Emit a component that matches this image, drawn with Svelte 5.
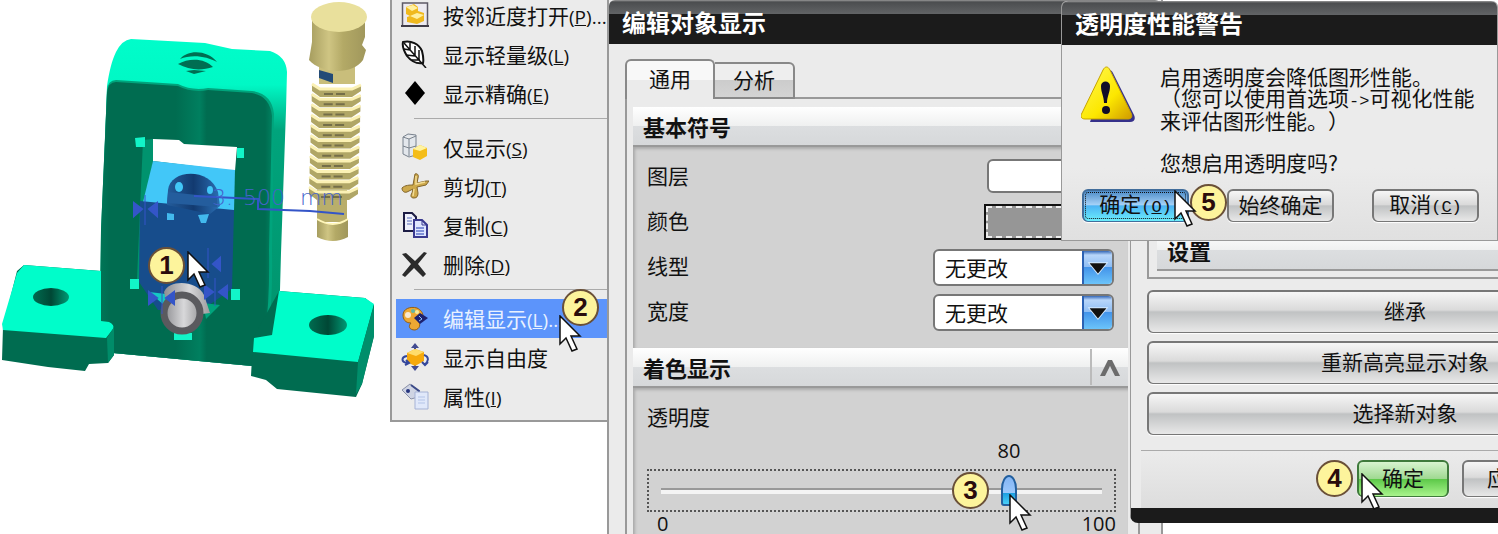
<script>
	let transparency = $state(80);
	let layer = $state("");
	let lineType = $state("none");
	let lineWidth = $state("none");
	let tab = $state("general");

	const menuGroups = [
		[
			{ icon: "open", label: "按邻近度打开", key: "P", more: true },
			{ icon: "feather", label: "显示轻量级", key: "L" },
			{ icon: "diamond", label: "显示精确", key: "E" }
		],
		[
			{ icon: "only", label: "仅显示", key: "S" },
			{ icon: "cut", label: "剪切", key: "T" },
			{ icon: "copy", label: "复制", key: "C" },
			{ icon: "delete", label: "删除", key: "D" }
		],
		[
			{ icon: "palette", label: "编辑显示", key: "L", more: true, active: true },
			{ icon: "freedom", label: "显示自由度" },
			{ icon: "props", label: "属性", key: "I" }
		]
	];

	const steps = [
		{ n: 1, x: 148, y: 247, cx: 187, cy: 251 },
		{ n: 2, x: 562, y: 289, cx: 559, cy: 315 },
		{ n: 3, x: 952, y: 472, cx: 1009, cy: 494 },
		{ n: 4, x: 1316, y: 460, cx: 1361, cy: 473 },
		{ n: 5, x: 1190, y: 184, cx: 1174, cy: 190 }
	];

	const threads = Array.from({ length: 11 }, (_, i) => ({ x: 312 - i * 0.3, y: 84 + i * 10.3 }));
</script>

{#snippet icon(name)}
	<svg class="icon" viewBox="0 0 28 28" aria-hidden="true">
		{#if name === "open"}
			<rect x="1.500" y="2" width="25" height="23" fill="#eceaf0" stroke="#5d5a66" stroke-width="1.500" />
			<path d="M5 6l8-3 4 3v4l6 2v8l-7 3-10-2v-5l3-1-4-2z" fill="#f0b91e" />
			<path d="M5 6l7-2 5 3-6 3zM9 15l7-3 7 2-7 4z" fill="#fff0a0" />
			<path d="M0 25h28" stroke="#3f3c48" stroke-width="2" />
		{:else if name === "feather"}
			<path d="M2 2c8-2 16 2 19 9 1 4 2 8 1 12-6 1-12-2-16-7C3 11 1 6 2 2z" fill="#fff" stroke="#111" stroke-width="2" />
			<path d="M3 3l22 25M9 3v7M14 6v9M18 10v10M3 9l6 1M5 15l9 1M11 20l8 0" fill="none" stroke="#111" stroke-width="1.500" />
		{:else if name === "diamond"}
			<path d="M14 2l10 12-10 12L4 14z" fill="#000" />
		{:else if name === "only"}
			<path d="M2 4l5-3 8 1v20l-7 2-6-3zM2 4l6 2 7-3M8 6v17M2 13l6 2 7-2" fill="#e3e7ec" stroke="#79828d" />
			<path d="M12 16l7-4 7 3v8l-7 4-7-3z" fill="#f4bd1a" />
			<path d="M12 16l7-4 7 3-7 3z" fill="#fff3a0" />
		{:else if name === "cut"}
			<path d="M14 2c3-1 4 2 3 4l-1 5 9-2 3 0-3 4-9 2 1 6c0 3-1 5-4 5s-4-2-2-5l1-4-6 3c-3 1-5-1-5-4 3-3 8-3 11-3z" fill="#cda94c" stroke="#82652b" />
			<path d="M15 4v8l9-2M13 17l-1 7" fill="none" stroke="#f2dc96" stroke-width="1.500" />
		{:else if name === "copy"}
			<path d="M3 2h8l4 4v14H3z" fill="#eef0fb" stroke="#1c1c44" stroke-width="2" />
			<path d="M6 7h5M6 10h5M6 13h5" stroke="#5568b8" />
			<path d="M13 9h8l5 5v12H13z" fill="#dfe6ff" stroke="#3a3a90" stroke-width="2" />
			<path d="M21 9v5h5" fill="none" stroke="#3a3a90" />
			<path d="M15 17h8M15 20h8M15 23h8" stroke="#6276cc" stroke-width="1.500" />
		{:else if name === "delete"}
			<path d="M1 4l4-1 9 8 9-9 3 1-9 11 8 10-3 3-9-9-9 9-3-2 9-11z" fill="#2b2b2b" />
		{:else if name === "palette"}
			<path d="M2 11C2 5 9 2 16 4c4 2 6 5 6 8l-5 5c3 3 2 8-3 9-6 0-7-4-4-7C4 19 2 15 2 11z" fill="#eda833" stroke="#945f12" />
			<circle cx="7" cy="11" r="3" fill="#f8e9cf" /><circle cx="12" cy="7" r="2" fill="#5fb7a8" /><circle cx="16" cy="8" r="2" fill="#f3eba0" />
			<path d="M13 14l6-5 8 5-8 6z" fill="#1c2170" /><path d="M18 12l3 3-3 2" fill="none" stroke="#8cc2ff" />
		{:else if name === "freedom"}
			<path d="M14 0l4 5h-8zM14 28l4-5h-8z" fill="#424b91" />
			<path d="M14 3v22" stroke="#424b91" stroke-width="2" />
			<path d="M6 10l8-4 9 3v9l-9 5-8-4z" fill="#f6a90c" /><path d="M6 10l8-4 9 3-8 4z" fill="#ffdc6b" />
			<path d="M6 13c-6 1-6 6 0 7M4 22l4-2-3-3M23 12c6 2 4 7 1 9M21 19l3 3 3-3" fill="none" stroke="#34479c" stroke-width="2" />
		{:else}
			<path d="M1 8l8-6 9 7-1 6-7 2z" fill="#cfd4e3" stroke="#8990a9" />
			<path d="M10 3l8 6-1 6" fill="none" stroke="#3c4b88" stroke-width="2" /><circle cx="7" cy="9" r="2" fill="#26357e" />
			<path d="M14 10h13v17H14z" fill="#e0e8fa" stroke="#a5b2d5" /><path d="M17 15h7M17 18h7M17 21h7" stroke="#b3c4e8" />
		{/if}
	</svg>
{/snippet}

<main class="desktop">
	<svg class="model" viewBox="0 0 390 420" role="img" aria-label="3D 模型">
		<defs>
			<linearGradient id="head" x1="0" x2="1">
				<stop offset="0" stop-color="#a69d5f" /><stop offset="0.35" stop-color="#cfc583" /><stop offset="0.6" stop-color="#b3a966" /><stop offset="1" stop-color="#a0975c" />
			</linearGradient>
			<linearGradient id="front" x1="0" x2="1">
				<stop offset="0" stop-color="#007657" /><stop offset="0.06" stop-color="#006c50" /><stop offset="0.44" stop-color="#006c50" />
				<stop offset="0.58" stop-color="#007f5f" /><stop offset="0.62" stop-color="#006c50" /><stop offset="0.96" stop-color="#006c50" /><stop offset="1" stop-color="#00805f" />
			</linearGradient>
			<linearGradient id="body" x1="0" y1="0" x2="0" y2="1">
				<stop offset="0" stop-color="#00fdca" /><stop offset="0.14" stop-color="#00f8c5" /><stop offset="0.28" stop-color="#00a47c" /><stop offset="0.8" stop-color="#00966f" /><stop offset="0.9" stop-color="#007a5a" />
			</linearGradient>
			<linearGradient id="cyl" x1="0" x2="1">
				<stop offset="0" stop-color="#245d9c" /><stop offset="0.5" stop-color="#123a70" /><stop offset="1" stop-color="#2b6fb4" />
			</linearGradient>
			<linearGradient id="bore" x1="0" x2="1">
				<stop offset="0" stop-color="#006c50" /><stop offset="0.5" stop-color="#004735" /><stop offset="1" stop-color="#009a75" />
			</linearGradient>
			<linearGradient id="pin" x1="0" x2="1">
				<stop offset="0" stop-color="#8e8e92" /><stop offset="0.55" stop-color="#d8d8da" /><stop offset="1" stop-color="#9c9c9e" />
			</linearGradient>
		</defs>

		<!-- upright -->
		<path d="M107 86C109 72 112 60 116 52Q122 40 131 39L205 43 232 49 270 51Q286 56 287 72L286 110 281 253 280 290 273 334 253 340 252 366 113 353 100 320 101 250z" fill="url(#body)" />
		<path d="M107 90Q108 80 116 80L178 84Q192 91 208 88L252 91Q272 94 274 114L272 250Q273 300 268 334L252 366 113 353 100 320 101 230z" fill="#00a47c" />
		<path d="M107 93Q108 82 116 82L178 86Q192 93 208 90L252 93Q270 96 272 116L269 250Q270 300 265 334L252 366 113 353 100 320 101 230z" fill="url(#front)" />
		<path d="M180 59c8-10 28-9 37 3-10-6-26-8-37-3zM178 64c12-7 28-5 35 3-12 4-24 3-35-3zM186 71l8-1 12 1-12 3z" fill="#006e52" />

		<!-- feet -->
		<path d="M24 265l77 6v50l8 2 5 6v26l-6 8-19 1-4 7-37-4-46-7 1-33 14-56z" fill="#006c50" />
		<path d="M24 265l77 6v50l8 1q6 3 4 7l-7 9-103-8-1-6 15-51z" fill="#00fdca" />
		<path d="M107 338l7-11v28l-6 8z" fill="#008c69" />
		<ellipse cx="51" cy="297" rx="18" ry="9" fill="url(#bore)" />
		<path d="M279 291l86 7 9 7v31l-12 48-6 13-79-8-11-9-15-4 2-38z" fill="#006c50" />
		<path d="M279 291l86 7 9 6-16 58-105-10 1-14 18-3z" fill="#00fdca" />
		<path d="M358 362l16-57v31l-12 48-6 10z" fill="#008e6b" />
		<ellipse cx="328" cy="325" rx="19" ry="10" fill="url(#bore)" />

		<!-- opening -->
		<path d="M143 140l10-1v22l-8 41-5 80-3-3z" fill="#00936e" />
		<path d="M153 139l26 1 5 4 53 3-2 24-82-10z" fill="#fff" />
		<path d="M153 161l82 9-1 41-91-9z" fill="#42c7f8" />
		<path d="M140 201l94 9-2 79-30 21h-44l-19-28z" fill="#174d8c" />
		<path d="M168 190c2-21 42-23 50 2l2 14-10 8-43-9z" fill="url(#cyl)" />
		<path d="M168 192l49 5v10l-50-4z" fill="#245d9d" />
		<ellipse cx="179" cy="187" rx="4" ry="5" fill="#42c7f8" /><ellipse cx="210" cy="190" rx="3" ry="4" fill="#42c7f8" />
		<path d="M198 215l11-1-3 9h-5zM167 213l7 1v6h-7z" fill="#42b9ed" />
		<path d="M135 138l10-1v10h-9zM237 148h7v10h-7zM130 279h9v10h-9zM231 289h9v11h-9zM174 333h18v7h-18z" fill="#12f5c8" />
		<path d="M149 292l17 2 6 18z" fill="#15c9c4" /><path d="M203 303l17 2-14 14z" fill="#00a47c" />
		<path d="M164 292c5-13 33-12 40 3l6 18-40 5z" fill="url(#pin)" />
		<circle cx="182" cy="313" r="18" fill="url(#pin)" stroke="#5a5a5e" stroke-width="7" />

		<!-- yellow screw -->
		<path d="M319 66l36-2v20h-36z" fill="#c9be7b" /><path d="M319 70l14 4v9l-14-5z" fill="#234b77" />
		<path d="M312 16v26l-3 18c12 14 44 15 54 0l3-10-4-5 3-8V16z" fill="url(#head)" />
		<ellipse cx="339" cy="17" rx="28" ry="15" fill="#e9e09c" />
		<path d="M317 190h30v32h-30z" fill="#b9ae6b" />
		{#each threads as t}
			<path d="M{t.x} {t.y}l8 5h32l9-4v6l-9 6h-32l-8-6z" fill="#b0a666" />
			<path d="M{t.x + 12} {t.y + 10}h22" stroke="#746e48" stroke-width="2" stroke-dasharray="9 3" />
			<path d="M{t.x} {t.y}l8 5h32l9-4" fill="none" stroke="#fbf1b4" stroke-width="3" />
		{/each}
		<path d="M317 219q16 10 31 0v18q-15 8-31 0z" fill="url(#head)" />
		<path d="M317 219q16 10 31 0" fill="none" stroke="#fff6b9" stroke-width="2" />

		<!-- dimension -->
		<g stroke="#3455c8" stroke-width="2" fill="#3455c8">
			<path d="M194 196l64 3v10l52 2 34 3" fill="none" />
			<path d="M145 195v30M208 248v30M215 278v28M162 286v28" fill="none" stroke-width="1" />
			<path d="M134 203v13l8-7zM157 203v13l-8-7zM220 258v12l-7-6zM205 286v12l8-6zM227 286v12l-8-6zM149 292v12l8-6zM174 292v12l-8-6z" />
		</g>
		<g class="dimension"><text x="212" y="205">3.</text><text x="243" y="205">500</text><text x="300" y="205">mm</text></g>
	</svg>

	<nav class="menu" aria-label="快捷菜单">
		{#each menuGroups as group, g}
			{#if g > 0}<hr />{/if}
			{#each group as item}
				<button type="button" class="menu-item" class:active={item.active}>
					{@render icon(item.icon)}
					<span>{item.label}{#if item.key}<span class="key">(<u>{item.key}</u>){item.more ? "..." : ""}</span>{/if}</span>
				</button>
			{/each}
		{/each}
	</nav>

	<section class="window display">
		<h1 class="title">编辑对象显示</h1>
		<div class="tabs">
			<button type="button" class:selected={tab === "general"} onclick={() => (tab = "general")}>通用</button>
			<button type="button" class:selected={tab === "analysis"} onclick={() => (tab = "analysis")}>分析</button>
			<div class="tab-line"></div>
		</div>
		<div class="panel">
			<h2 class="group-title">基本符号</h2>
			<div class="group basic">
				<div class="field">
					<label for="layer">图层</label>
					<input id="layer" class="layer" type="text" bind:value={layer} />
				</div>
				<div class="field">
					<label for="color">颜色</label>
					<button id="color" class="color" type="button" aria-label="颜色"><span></span></button>
				</div>
				<div class="field">
					<label for="line-type">线型</label>
					<div class="select">
						<select id="line-type" bind:value={lineType}><option value="none">无更改</option></select>
						<svg viewBox="0 0 30 33" aria-hidden="true"><path d="M6 12h18l-9 11z" fill="#111" stroke="#d5ebff" stroke-width="2" paint-order="stroke" /></svg>
					</div>
				</div>
				<div class="field">
					<label for="line-width">宽度</label>
					<div class="select">
						<select id="line-width" bind:value={lineWidth}><option value="none">无更改</option></select>
						<svg viewBox="0 0 30 33" aria-hidden="true"><path d="M6 12h18l-9 11z" fill="#111" stroke="#d5ebff" stroke-width="2" paint-order="stroke" /></svg>
					</div>
				</div>
			</div>

			<div class="group-title">
				<h2>着色显示</h2>
				<button type="button" class="collapse" aria-label="折叠">
					<svg viewBox="0 0 22 18" aria-hidden="true"><path d="M1 17L9 1h4l8 16h-5L11 7 6 17z" fill="#6c6c6c" /></svg>
				</button>
			</div>
			<div class="group shade">
				<label for="transparency">透明度</label>
				<div class="value"><output style="margin-left: {transparency}%">{transparency}</output></div>
				<div class="slider"><input id="transparency" type="range" min="0" max="100" bind:value={transparency} /></div>
				<div class="range"><span>0</span><span>100</span></div>
			</div>
		</div>
	</section>

	<section class="window objects">
		<div class="settings"><h2 class="group-title">设置</h2></div>
		<div class="stack">
			<button type="button" class="push">继承</button>
			<button type="button" class="push">重新高亮显示对象</button>
			<button type="button" class="push">选择新对象</button>
		</div>
		<div class="actions">
			<button type="button" class="push ok">确定</button>
			<button type="button" class="push">应用</button>
			<button type="button" class="push">取消</button>
		</div>
	</section>

	<section class="window warning" role="alertdialog" aria-labelledby="warning-title">
		<h1 class="title" id="warning-title">透明度性能警告</h1>
		<div class="message">
			<svg viewBox="0 0 54 58" aria-hidden="true">
				<defs>
					<linearGradient id="sign" x1="0" y1="0" x2="1" y2="1">
						<stop offset="0.2" stop-color="#fff43a" /><stop offset="0.6" stop-color="#fce700" /><stop offset="1" stop-color="#d09a00" />
					</linearGradient>
				</defs>
				<path d="M27 4c2-1 4 1 5 3l21 42c2 4 0 7-4 7H9z" fill="#35308a" />
				<path d="M22 4c2-4 5-4 7 0l21 43c2 4 0 6-3 6H4c-4 0-5-3-3-6z" fill="url(#sign)" stroke="#c7a300" />
				<path d="M20 20c0-6 9-6 9 0 0 7-3 10-3 17h-3c0-7-3-10-3-17z" fill="#100c28" /><circle cx="25" cy="44" r="4" fill="#100c28" />
			</svg>
			<p>启用透明度会降低图形性能。<br />（您可以使用首选项<span class="mono">-&gt;</span>可视化性能<br />来评估图形性能。）<br /><br />您想启用透明度吗?</p>
		</div>
		<div class="choices">
			<button type="button" class="push primary">确定<span class="mono">(<u>O</u>)</span></button>
			<button type="button" class="push">始终确定</button>
			<button type="button" class="push">取消<span class="mono">(<u>C</u>)</span></button>
		</div>
	</section>

	{#each steps as step}
		<span class="badge" style="left: {step.x}px; top: {step.y}px">{step.n}</span>
		<svg class="cursor" style="left: {step.cx}px; top: {step.cy}px" viewBox="0 0 24 38" aria-hidden="true">
			<path d="M1 1v28l6-6 6 13 5-2-6-13h9z" fill="#fff" stroke="#111" stroke-width="1.500" />
		</svg>
	{/each}
</main>

<style>
	:global(body) {
		background: #fff;
	}

	.desktop {
		position: relative;
		display: flex;
		height: 100vh;
		overflow: hidden;
		font: 21px/24px "Noto Sans CJK SC", sans-serif;
		color: #111;
		text-spacing-trim: space-all;
	}

	button,
	input,
	select {
		font: inherit;
		color: inherit;
		margin: 0;
		padding: 0;
		box-sizing: border-box;
	}

	h1,
	h2,
	p {
		margin: 0;
	}

	.model {
		flex: none;
		width: 390px;
		height: 420px;
	}

	.dimension {
		font: 22px "DejaVu Sans", sans-serif;
		font-weight: 200;
		fill: #4464cc;
	}

	/* context menu */
	.menu {
		flex: none;
		align-self: flex-start;
		box-sizing: border-box;
		width: 217px;
		margin-top: -4px;
		padding: 0 0 4px 4px;
		background: #ebebeb;
		border-left: 2px solid #999;
		border-bottom: 2px solid #999;
	}

	.menu-item {
		display: flex;
		align-items: center;
		gap: 14px;
		width: 100%;
		height: 39px;
		padding: 0 0 2px 5px;
		border: none;
		background: none;
		text-align: left;
		white-space: nowrap;
	}

	.menu-item.active {
		background: #5c94fb;
		color: #e8f1ff;
	}

	.menu hr {
		height: 1px;
		margin: 5px 0 9px 18px;
		border: none;
		background: #aaa;
	}

	.icon {
		flex: none;
		width: 28px;
		height: 28px;
	}

	.key {
		font: 19px/20px "Open Sans", sans-serif;
	}

	/* windows */
	.window {
		box-sizing: border-box;
		background: #ebebeb;
		border: 1px solid #999;
	}

	.title {
		padding: 0 13px;
		font-size: 24px;
		line-height: 44px;
		font-weight: bold;
		color: #fff;
		background: linear-gradient(#999 0, #4b4d4f 2px, #626466 14px, #1b1b1b 14px);
		border-radius: 6px 6px 0 0;
	}

	.display {
		flex: none;
		display: flex;
		flex-direction: column;
		width: 556px;
		border-width: 0 2px;
	}

	.tabs {
		display: flex;
		align-items: flex-end;
		margin: 15px 21px 0 16px;
		height: 40px;
	}

	.tabs button {
		width: 80px;
		height: 37px;
		padding-bottom: 4px;
		border: 2px solid #888;
		border-left: none;
		border-radius: 0 6px 0 0;
		background: linear-gradient(#eee 50%, #ccc 50%, #d4d4d4);
	}

	.tabs button.selected {
		width: 90px;
		height: 40px;
		border: 2px solid #888;
		border-bottom: none;
		border-radius: 6px 6px 0 0;
		background: linear-gradient(#f8f8f8 50%, #ebebeb 50%);
	}

	.tab-line {
		flex: 1;
		border-bottom: 2px solid #999;
	}

	.panel {
		flex: 1;
		margin: 0 21px 0 16px;
		padding: 8px 10px 0 6px;
		border: 2px solid #999;
		border-top: none;
	}

	.group-title {
		display: flex;
		align-items: center;
		justify-content: space-between;
		box-sizing: border-box;
		height: 40px;
		padding-left: 10px;
		font-size: 22px;
		font-weight: bold;
		border-bottom: 2px solid #999;
		background: linear-gradient(#fff, #eff0f0 50%, #dcdee0 50%, #d6d8da);
	}

	.group-title h2 {
		font-size: 22px;
	}

	.collapse {
		width: 38px;
		height: 36px;
		border: none;
		border-left: 2px solid #bbb;
		background: none;
	}

	.collapse svg {
		width: 22px;
		height: 18px;
	}

	.group {
		padding: 12px 14px;
		background: #d2d2d2;
		box-shadow: inset 2px 2px 3px #aaa;
	}

	.basic {
		display: flex;
		flex-direction: column;
		gap: 8px;
		box-sizing: border-box;
		height: 201px;
	}

	.field {
		display: flex;
		justify-content: space-between;
		height: 37px;
	}

	.field label {
		padding-top: 4px;
	}

	.layer {
		width: 127px;
		height: 34px;
		border: 2px solid #777;
		border-radius: 6px;
		background: #fff;
	}

	.color {
		display: flex;
		width: 130px;
		height: 36px;
		border: 2px solid #111;
		background: #969696;
	}

	.color span {
		flex: 1;
		border: 2px dashed #eee;
	}

	.select {
		display: grid;
		grid-template-columns: 1fr 30px;
		box-sizing: border-box;
		width: 181px;
		height: 37px;
		border: 2px solid #777;
		border-radius: 6px;
		background: #fff;
		overflow: hidden;
	}

	.select select {
		grid-area: 1 / 1 / 2 / 3;
		padding: 0 0 2px 10px;
		border: none;
		background: none;
		appearance: none;
	}

	.select svg {
		grid-area: 1 / 2;
		box-sizing: border-box;
		width: 30px;
		height: 33px;
		pointer-events: none;
		border-left: 2px solid #2c62b4;
		background: linear-gradient(#3568b8, #b8d6fa 4px, #8cbcf4 50%, #4394ea 50%, #6cc4fa);
	}

	.shade {
		display: flex;
		flex-direction: column;
		height: 200px;
		padding: 16px 12px 0 14px;
	}

	.value {
		display: flex;
		margin: 11px 22px 6px;
	}

	.value output {
		display: flex;
		justify-content: center;
		width: 0;
	}

	.value,
	.range {
		font: 20px/24px "Open Sans", sans-serif;
	}

	.slider {
		height: 39px;
		padding: 0 12px;
		border: 2px dotted #555;
		display: flex;
		align-items: center;
	}

	.slider input {
		width: 100%;
		height: 32px;
		appearance: none;
		background: none;
	}

	.slider input::-webkit-slider-runnable-track {
		height: 6px;
		border-top: 2px solid #999;
		background: #f4f4f4;
		box-sizing: border-box;
	}

	.slider input::-webkit-slider-thumb {
		appearance: none;
		box-sizing: border-box;
		width: 16px;
		height: 31px;
		margin-top: -15px;
		border: 2px solid #225f9e;
		border-radius: 8px 8px 3px 3px / 14px 14px 3px 3px;
		background: linear-gradient(#83b5f4, #9cc8fc 60%, #1c9fe0 60%, #48cff8);
	}

	.range {
		display: flex;
		justify-content: space-between;
		padding: 0 0 0 10px;
	}

	/* push buttons */
	.push {
		padding-bottom: 4px;
		border: 2px solid #777;
		border-bottom-width: 1px;
		border-radius: 6px;
		box-shadow: 0 1px 1px #fff;
		background: linear-gradient(#f6f6f6, #dadada 45%, #c0c2c3 50%, #e8e8e8);
	}

	.objects {
		position: absolute;
		left: 1130px;
		top: 224px;
		width: 550px;
		padding-left: 16px;
		border-bottom: 15px solid #1b1b1b;
		border-bottom-left-radius: 8px;
	}

	.settings {
		padding: 6px 0 6px 8px;
		border: 2px solid #999;
		border-top: none;
	}

	.stack {
		display: grid;
		gap: 8px;
		padding: 11px 16px 15px 0;
	}

	.stack .push {
		height: 43px;
	}

	.actions {
		display: flex;
		gap: 13px;
		margin-left: -6px;
		padding: 9px 16px 11px 216px;
		border-top: 1px solid #aaa;
		background: linear-gradient(#ebebeb, #ddd);
	}

	.actions .push {
		flex: none;
		width: 92px;
		height: 37px;
	}

	.ok {
		border-color: #3f7a3c;
		background: linear-gradient(#d8f4d0, #9ed890 50%, #5cc848 50%, #a8f48c);
	}

	.warning {
		position: absolute;
		left: 1061px;
		right: 0;
		top: 1px;
		border-top: none;
		border-radius: 6px 6px 0 0;
		background: linear-gradient(#ebebeb 70%, #e0e0e0);
	}

	.message {
		display: flex;
		gap: 25px;
		padding: 21px 0 0 19px;
	}

	.message svg {
		flex: none;
		width: 54px;
		height: 58px;
	}

	.message p {
		line-height: 21px;
		white-space: nowrap;
	}

	.mono {
		font: 17px/17px "Liberation Mono", monospace;
	}

	.choices {
		display: flex;
		gap: 38px;
		padding: 16px 0 18px 20px;
	}

	.choices .push {
		width: 107px;
		height: 33px;
		line-height: 22px;
		white-space: nowrap;
	}

	.choices .primary {
		border-color: #416d9b;
		outline: 1px dotted #111;
		outline-offset: -4px;
		background: linear-gradient(#4d8cc8, #a4d0f6 45%, #4cb4f4 50%, #6ceefc);
	}

	/* step marks */
	.badge {
		position: absolute;
		box-sizing: border-box;
		width: 37px;
		height: 37px;
		border: 2px solid #6a5038;
		border-radius: 50%;
		background: #fdf49c;
		color: #2a0c0c;
		font: bold 26px/33px "Liberation Sans", sans-serif;
		text-align: center;
	}

	.cursor {
		position: absolute;
		width: 24px;
		height: 38px;
	}
</style>
